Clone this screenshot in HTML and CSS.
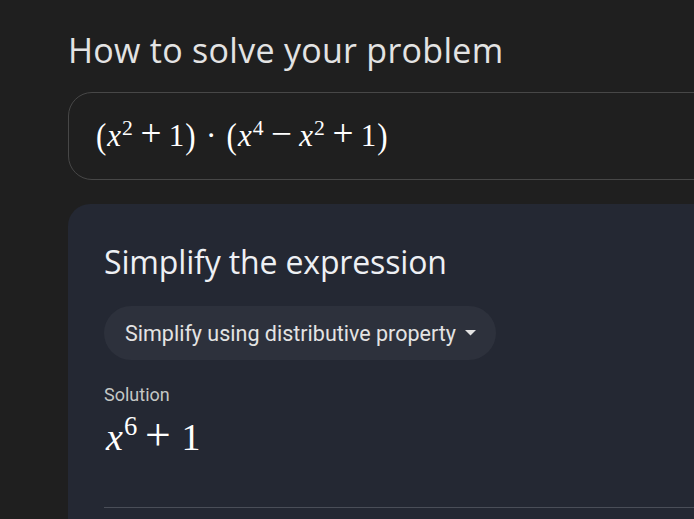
FILE: index.html
```html
<!DOCTYPE html>
<html lang="en">
<head>
    <meta charset="UTF-8">
    <meta name="viewport" content="width=device-width, initial-scale=1.0">
    <title>How to solve your problem</title>
    <link rel="stylesheet" href="styles.css">
</head>
<body>
    <div class="page">
        <h1 class="page-title">How to solve your problem</h1>

        <div class="problem">
            <span class="math problem-math">
                <span class="paren">(</span><i>x</i><sup>2</sup><span class="op">+</span>1<span class="paren">)</span><span class="dot">&middot;</span><span class="paren">(</span><i>x</i><sup>4</sup><span class="op">&minus;</span><i>x</i><sup>2</sup><span class="op">+</span>1<span class="paren">)</span>
            </span>
        </div>

        <div class="card">
            <h2 class="card-title">Simplify the expression</h2>

            <button class="method-chip">
                Simplify using distributive property
                <svg class="caret" width="11" height="6" viewBox="0 0 11 6"><path d="M0 0 L11 0 L5.5 5.5 Z" fill="currentColor"/></svg>
            </button>

            <div class="solution">
                <p class="solution-label">Solution</p>
                <span class="math answer"><i>x</i><sup>6</sup><span class="op">+</span>1</span>
            </div>

            <hr class="divider">
        </div>
    </div>
</body>
</html>
```

FILE: styles.css
```css
body, html {
    margin: 0;
    padding: 0;
    background-color: #1f1f1f;
    overflow: hidden;
    font-family: 'Open Sans', sans-serif;
}

.page {
    width: 760px;
    padding: 22px 0 0 68px;
}

.page-title {
    margin: 0;
    font-size: 34px;
    font-weight: 400;
    line-height: 56px;
    color: #e3e3e3;
    letter-spacing: 0.28px;
}

.problem {
    margin-top: 14px;
    height: 86px;
    border: 1px solid #474747;
    border-radius: 24px;
    display: flex;
    align-items: center;
    padding-left: 26px;
}

.math {
    font-family: 'Liberation Serif', 'Times New Roman', serif;
    color: #ffffff;
    white-space: nowrap;
}

    .math i {
        font-style: italic;
    }

    .math sup {
        font-size: 0.7em;
        line-height: 0;
        vertical-align: 0.5em;
        margin-left: 1px;
    }

    .math .op {
        font-size: 1.2em;
        line-height: 0;
        margin: 0 0.2em;
    }

    .math .dot {
        margin: 0 0.3em;
    }

.problem-math {
    font-size: 31px;
}

    .problem-math .paren {
        display: inline-block;
        transform: scaleY(1.15);
        margin: 0 1px;
    }

.card {
    margin-top: 24px;
    background-color: #242833;
    border-radius: 22px;
    padding: 36px 36px 0 36px;
    height: 400px;
}

.card-title {
    margin: 0;
    font-size: 32px;
    font-weight: 400;
    line-height: 44px;
    color: #eef0f4;
    letter-spacing: -0.15px;
}

.method-chip {
    margin-top: 22px;
    height: 54px;
    padding: 0 20px 0 21px;
    border: none;
    border-radius: 27px;
    background-color: #2d313c;
    color: #e3e3e3;
    font-family: 'Roboto', sans-serif;
    font-size: 21.5px;
    display: inline-flex;
    align-items: center;
    gap: 9px;
}

.solution {
    margin-top: 24px;
}

.solution-label {
    margin: 0;
    font-family: 'Roboto', sans-serif;
    font-size: 18px;
    color: #c4c7c5;
}

.answer {
    display: block;
    font-size: 38px;
    line-height: 48px;
    margin-top: 8px;
    padding-left: 2px;
}

    .answer sup {
        vertical-align: 0.55em;
        margin-right: 0.12em;
    }

    .answer .op {
        margin: 0 0.24em 0 0.1em;
    }

.divider {
    margin: 46px 0 0 0;
    border: none;
    border-top: 1px solid #4a4e58;
}
```
